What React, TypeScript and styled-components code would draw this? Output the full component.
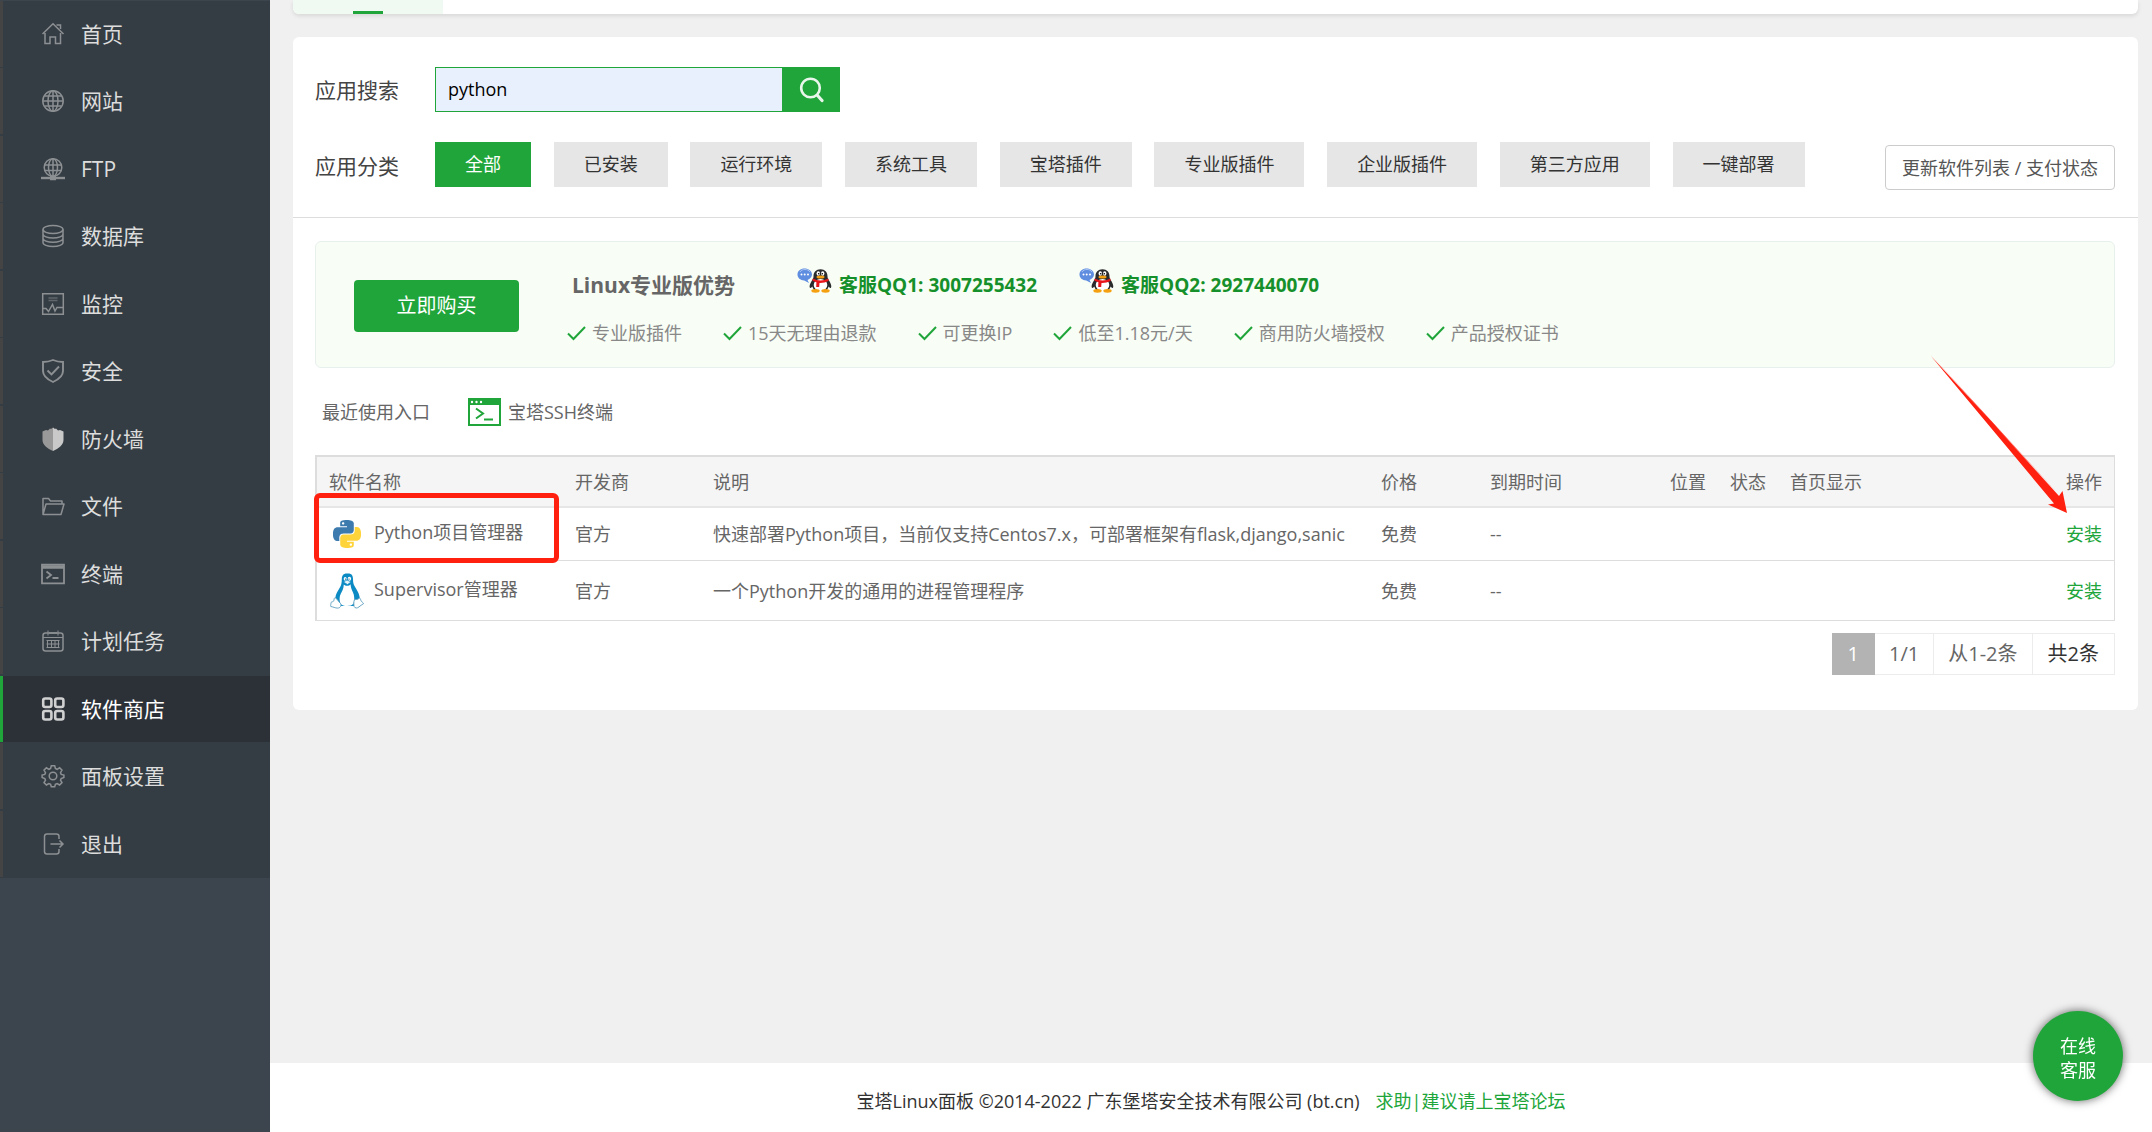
import React from 'react';
import styled, { createGlobalStyle } from 'styled-components';

const green = '#20a53a';
const red = '#ff2010';

const GlobalStyle = createGlobalStyle`
  * { box-sizing: border-box; }
  body {
    margin: 0;
    background: #f0f0f0;
    color: #333;
    font-family: "Open Sans", "Noto Sans CJK SC", sans-serif;
    font-size: 18px;
    line-height: 24px;
  }
  button, input { font: inherit; }
  a { color: inherit; text-decoration: none; }
  svg { display: block; flex: none; }
`;

const Layout = styled.div`
  display: flex;
  min-height: 100vh;
`;

/* ---------- sidebar ---------- */

const Sidebar = styled.nav`
  flex: none;
  width: 270px;
  background: #3c444d;
  padding-top: 1px;
`;

const Menu = styled.ul`
  list-style: none;
  margin: 0;
  padding: 0;
  background: #353d44;
`;

const MenuItem = styled.li`
  padding-bottom: 1px;
  &:nth-child(even) { padding-bottom: 2px; }
`;

const MenuLink = styled.a<{ $active?: boolean }>`
  display: flex;
  align-items: center;
  gap: 16px;
  height: 66px;
  padding-left: 38px;
  border-left: 3px solid ${p => (p.$active ? green : '#444')};
  background: ${p => (p.$active ? '#2c3138' : 'transparent')};
  color: ${p => (p.$active ? '#fff' : '#ddd')};
  font-size: 21px;
  svg { color: ${p => (p.$active ? '#d0d0d0' : '#8c9093')}; }
`;

const Glyph = ({ children }: { children: React.ReactNode }) => (
  <svg width="24" height="24" viewBox="0 0 24 24" fill="none" stroke="currentColor" strokeWidth="1.5" aria-hidden="true">
    {children}
  </svg>
);

const icons: Record<string, React.ReactNode> = {
  home: <path d="M1.5 12 12 1.8 22.5 12M4 11v10.5h5V15h5.500v6.500h5V11M15.500 3h4v4" />,
  globe: (
    <>
      <circle cx="12" cy="12" r="10.200" />
      <ellipse cx="12" cy="12" rx="5" ry="10.200" />
      <path d="M12 2v20M2 12h20M3.500 7h17M3.500 17h17" />
    </>
  ),
  ftp: (
    <>
      <circle cx="12" cy="10.500" r="8.800" />
      <ellipse cx="12" cy="10.500" rx="4.500" ry="8.800" />
      <path d="M12 2v18M3.500 8h17M3.500 13.500h17" />
      <path d="M0 21h24" strokeWidth="2.400" />
      <path d="M9 21h6" strokeWidth="4.500" />
    </>
  ),
  database: (
    <>
      <ellipse cx="12" cy="5.500" rx="10" ry="4" />
      <path d="M2 5.500v13c0 2.300 4.500 4 10 4s10-1.700 10-4v-13M2 10c0 2.300 4.500 4 10 4s10-1.700 10-4M2 14.300c0 2.300 4.500 4 10 4s10-1.700 10-4" />
    </>
  ),
  monitor: (
    <>
      <path d="M1.700 1.700h20.600v20.600H1.700z" />
      <path d="M7.500 6h9M7.500 8.500h9" opacity=".5" />
      <path d="M1.700 16.500H5l2.500 3 4-7 2.500 6.500 2-3.500h6" />
    </>
  ),
  safe: (
    <path d="M12 1c3.500 1.500 6.500 2 10 2v9c0 5-4.500 8.500-10 11C6.500 20.500 2 17 2 12V3c3.500 0 6.500-.5 10-2zM6.500 11.500l4 4 7.500-8" strokeWidth="1.900" />
  ),
  firewall: (
    <>
      <path d="M12 .5 10 2 9 1.500 7 3.500 5 3 1.500 4.500V13c0 5 5 8.500 10.500 11z" fill="#999" stroke="none" />
      <path d="m12 .5 2 1.500 1-.5 2 2 2-.5 3.500 1.500V13c0 5-5 8.500-10.500 11z" fill="#c9c9c9" stroke="none" />
    </>
  ),
  folder: <path d="M2 20.500V4.500h5.500l2 2.500H21v3M2 20.500l3-10.500h18l-3 10.500z" strokeLinejoin="round" />,
  terminal: (
    <>
      <path d="M1 2.700h22v18.600H1z" strokeWidth="1.800" />
      <path d="M1 5h22" strokeWidth="3.500" />
      <path d="m5.500 9.500 4.500 3.500-4.500 3.500M11.500 16h6" strokeWidth="1.800" />
    </>
  ),
  calendar: (
    <>
      <rect x="2" y="4" width="20" height="18" rx="2.500" />
      <path d="M7 1.500v5M17 1.500v5M2 8.500h20M5.500 11.500h13M5.500 15h13M5.500 18.500h13M6.500 11v8M10.500 11v8M14 11v8M17.500 11v8" strokeWidth="1" />
      <path d="M8 4h8" />
    </>
  ),
  store: (
    <g strokeWidth="2.600">
      <rect x="2.200" y="1.500" width="8.200" height="8.500" rx="2" />
      <rect x="14.200" y="1.500" width="8.200" height="8.500" rx="2" />
      <rect x="2.200" y="14" width="8.200" height="8.500" rx="2" />
      <rect x="14.200" y="14" width="8.200" height="8.500" rx="2" />
    </g>
  ),
  settings: (
    <>
      <circle cx="12" cy="12" r="3.800" />
      <path d="m10.300 1.800h3.400l.7 2.700 1.700.8 2.500-1.500 2.400 2.400-1.500 2.500.7 1.700 2.700.7v2.400l-2.700 1-.7 1.700 1.500 2.400-2.400 2.400-2.500-1.500-1.700.7-.7 2.600h-3.400l-.7-2.600-1.700-.7-2.500 1.500-2.400-2.400 1.500-2.400-.7-1.700-2.700-1v-2.400l2.700-.7.7-1.700-1.500-2.500 2.400-2.400 2.500 1.500 1.700-.8z" />
    </>
  ),
  exit: <path d="M18 7V4.500c0-1.500-1-2.500-2.500-2.500H6C4.500 2 3.500 3 3.500 4.500v15C3.500 21 4.500 22 6 22h9.500c1.500 0 2.500-1 2.500-2.500V17M9.500 12H22M18.500 8.500 22 12l-3.500 3.500" />,
};

const menu = [
  ['home', '首页'],
  ['globe', '网站'],
  ['ftp', 'FTP'],
  ['database', '数据库'],
  ['monitor', '监控'],
  ['safe', '安全'],
  ['firewall', '防火墙'],
  ['folder', '文件'],
  ['terminal', '终端'],
  ['calendar', '计划任务'],
  ['store', '软件商店'],
  ['settings', '面板设置'],
  ['exit', '退出'],
];

/* ---------- page ---------- */

const Page = styled.div`
  flex: 1;
  min-width: 0;
  display: flex;
  flex-direction: column;
`;

const Content = styled.main`
  flex: 1;
  padding: 0 14px 24px 23px;
`;

const TopTabs = styled.div`
  height: 14px;
  margin-bottom: 23px;
  background: #fff;
  border-radius: 0 0 6px 6px;
  box-shadow: 0 2px 4px rgba(0, 0, 0, 0.1);
  overflow: hidden;
`;

const ActiveTab = styled.div`
  display: flex;
  align-items: flex-end;
  justify-content: center;
  width: 150px;
  height: 100%;
  background: #f0f9f2;
  &::after {
    content: '';
    width: 30px;
    height: 3px;
    background: ${green};
  }
`;

const Card = styled.section`
  background: #fff;
  border-radius: 6px;
`;

const Filters = styled.div`
  display: grid;
  gap: 30px;
  padding: 30px 23px 27px 22px;
  border-bottom: 1px solid #ddd;
`;

const FilterRow = styled.div`
  display: flex;
  align-items: center;
`;

const FilterLabel = styled.label`
  width: 120px;
  font-size: 21px;
  color: #444;
`;

const SearchBox = styled.form`
  display: flex;
  height: 45px;
`;

const SearchInput = styled.input`
  width: 347px;
  padding: 0 12px 2px;
  border: 1px solid ${green};
  border-right: 0;
  background: #e8f0fe;
  color: #000;
  outline: none;
`;

const SearchButton = styled.button`
  display: flex;
  align-items: center;
  justify-content: center;
  width: 58px;
  border: 0;
  background: ${green};
`;

const Categories = styled.div`
  flex: 1;
  align-self: flex-start;
`;

const Category = styled.button<{ $active?: boolean }>`
  height: 45px;
  padding: 0 30px 2px;
  margin-right: 18px;
  border: 0;
  vertical-align: top;
  background: ${p => (p.$active ? green : '#e6e6e6')};
  color: ${p => (p.$active ? '#fff' : '#333')};
`;

const RefreshButton = styled.button`
  align-self: flex-start;
  height: 45px;
  margin-top: 3px;
  padding: 0 16px;
  border: 1px solid #ccc;
  border-radius: 4px;
  background: #fff;
  color: #555;
`;

const CardBody = styled.div`
  padding: 23px 23px 35px 22px;
`;

const Banner = styled.div`
  display: flex;
  align-items: center;
  gap: 48px;
  height: 127px;
  padding-left: 38px;
  border: 1px solid #e8f0ee;
  border-radius: 6px;
  background: #f8fdf5;
`;

const BuyButton = styled.button`
  width: 165px;
  height: 52px;
  margin-top: 2px;
  border: 0;
  border-radius: 4px;
  background: ${green};
  color: #fff;
  font-size: 20px;
`;

const BannerInfo = styled.div`
  display: grid;
  gap: 20px;
  padding-top: 4px;
`;

const BannerTop = styled.div`
  display: flex;
  align-items: center;
  padding-left: 5px;
`;

const BannerTitle = styled.h2`
  width: 225px;
  margin: 0;
  color: #666;
  font-size: 21px;
  line-height: 24px;
`;

const Contact = styled.a`
  display: flex;
  align-items: center;
  gap: 7px;
  margin-right: 42px;
  color: #16902a;
  font-size: 19px;
  font-weight: 700;
  svg { margin-bottom: 8px; }
`;

const Features = styled.ul`
  display: flex;
  gap: 41px;
  margin: 0;
  padding: 0;
  list-style: none;
  color: #888;
`;

const Feature = styled.li`
  display: flex;
  align-items: center;
  gap: 6px;
`;

const Recent = styled.div`
  display: flex;
  align-items: center;
  height: 28px;
  margin: 30px 0 29px;
  padding-left: 7px;
  gap: 38px;
  color: #666;
`;

const RecentLink = styled.a`
  display: flex;
  align-items: center;
  gap: 7px;
`;

/* ---------- table ---------- */

const Table = styled.table`
  width: 100%;
  table-layout: fixed;
  border: solid #ddd;
  border-width: 2px 1px 0 2px;
  border-spacing: 0;
  color: #666;
`;

const Head = styled.th<{ $w?: number; $right?: boolean }>`
  position: relative;
  width: ${p => (p.$w ? `${p.$w}px` : 'auto')};
  height: 51px;
  padding: 0 12px;
  border-bottom: 2px solid #e6e6e6;
  background: #f5f5f5;
  font-weight: 400;
  text-align: ${p => (p.$right ? 'right' : 'left')};
  white-space: nowrap;
`;

const Row = styled.tr<{ $tall?: boolean }>`
  height: ${p => (p.$tall ? 60 : 53)}px;
`;

const Cell = styled.td<{ $right?: boolean }>`
  position: relative;
  padding: 0 12px;
  border-bottom: 1px solid #ddd;
  text-align: ${p => (p.$right ? 'right' : 'left')};
  white-space: nowrap;
`;

const SoftName = styled.a`
  display: flex;
  align-items: center;
  gap: 9px;
`;

const SoftIcon = styled.span`
  display: flex;
  justify-content: center;
  width: 36px;
`;

const SoftText = styled.span`
  padding-bottom: 4px;
`;

const InstallLink = styled.a`
  color: ${green};
`;

const Highlight = styled.span`
  position: absolute;
  top: -15px;
  left: -3px;
  right: 4px;
  bottom: -3px;
  border: 5px solid ${red};
  border-radius: 6px;
  pointer-events: none;
`;

const Pointer = styled.svg`
  position: absolute;
  top: -102px;
  right: 46px;
  pointer-events: none;
`;

const Pager = styled.div`
  display: flex;
  justify-content: flex-end;
  margin-top: 12px;
  font-size: 20px;
  color: #666;
`;

const PageCell = styled.span<{ $current?: boolean; $strong?: boolean }>`
  height: 42px;
  padding: 0 ${p => (p.$current || p.$strong ? 15 : 14)}px;
  border: 1px solid ${p => (p.$current ? '#b3b3b3' : '#ececec')};
  border-left-width: ${p => (p.$current ? 1 : 0)}px;
  background: ${p => (p.$current ? '#b3b3b3' : '#fff')};
  color: ${p => (p.$current ? '#fff' : p.$strong ? '#333' : 'inherit')};
  line-height: 40px;
`;

const Footer = styled.footer`
  display: flex;
  align-items: center;
  justify-content: center;
  gap: 16px;
  height: 69px;
  padding-top: 6px;
  background: #fff;
  a { color: ${green}; }
`;

const Support = styled.button`
  position: fixed;
  right: 29px;
  bottom: 31px;
  width: 90px;
  height: 90px;
  padding: 4px 24px 0;
  border: 0;
  border-radius: 50%;
  background: ${green};
  box-shadow: 0 0 10px rgba(0, 0, 0, 0.6);
  color: #fff;
`;

/* ---------- drawings ---------- */

const QQIcon = () => (
  <svg width="35" height="25" viewBox="0 0 35 25" aria-hidden="true">
    <path d="M7.500.5C11.500.5 15 3 15 6.500c0 2.500-2 4.600-4.500 5.500l1.500 3-4.800-2.600C3.200 12.300.5 9.800.5 6.500.5 3 3.500.5 7.500.5z" fill="#5f8de0" />
    <path d="M3 4c1-2 3-2.500 5-2.500s4 .8 5 2.500" fill="none" stroke="#a9c4f3" />
    <g fill="#fff"><circle cx="4.500" cy="6.500" r="1" /><circle cx="7.700" cy="6.500" r="1" /><circle cx="11" cy="6.500" r="1" /></g>
    <path d="M23.500 1.200c4.500 0 7 3 7 7 0 2 .5 2.500 2 5 1.500 2.700 2.300 5 1.500 6.500-.6.800-1.800-.3-2.300-1.200L30 22H17l-1.800-3.500c-.5.900-1.700 2-2.300 1.200-.8-1.500 0-3.800 1.600-6.500 1.500-2.500 2-3 2-5 0-4 2.500-7 7-7z" fill="#2b2b2e" />
    <ellipse cx="23.500" cy="17" rx="6.800" ry="6" fill="#fff" />
    <ellipse cx="18.500" cy="22.800" rx="4.200" ry="1.900" fill="#f5a010" />
    <ellipse cx="28.500" cy="22.800" rx="4.200" ry="1.900" fill="#f5a010" />
    <ellipse cx="21.300" cy="5.500" rx="1.700" ry="2.200" fill="#fff" />
    <ellipse cx="25.700" cy="5.500" rx="1.700" ry="2.200" fill="#fff" />
    <circle cx="21.700" cy="5.800" r=".8" /><circle cx="25.300" cy="5.800" r=".8" />
    <ellipse cx="23.500" cy="9" rx="4" ry="1.500" fill="#f5a010" />
    <path d="M15.800 10.500c4.500 2.500 11 2.500 15.500 0l.4 2.300c-3 1.700-6 2.300-9.200 2.200l-.3 4h-3l.2-4.700c-1.500-.4-2.900-1-4-1.700z" fill="#e8151b" />
  </svg>
);

const CheckIcon = () => (
  <svg width="19" height="15" viewBox="0 0 19 15" fill="none" stroke={green} strokeWidth="2" aria-hidden="true">
    <path d="m1 7.500 5.500 5.500L18 1" />
  </svg>
);

const SshIcon = () => (
  <svg width="33" height="28" viewBox="0 0 33 28" aria-hidden="true">
    <rect x="1" y="1" width="31" height="26" fill="#fff" stroke={green} strokeWidth="2" />
    <path d="M0 0h33v7H0z" fill={green} />
    <g fill="#fff"><circle cx="4" cy="4" r="1.200" /><circle cx="8.500" cy="4" r="1.200" /><circle cx="13" cy="4" r="1.200" /></g>
    <path d="m8 10.500 7 5-7 5M16 21.500h9" fill="none" stroke={green} strokeWidth="2" />
  </svg>
);

const PythonIcon = () => (
  <svg width="28" height="28" viewBox="0 0 24 24" aria-hidden="true">
    <path fill="#3d7aae" d="M14.25.18l.9.2.73.26.59.3.45.32.34.34.25.34.16.33.1.3.04.26.02.2-.01.13V8.5l-.05.63-.13.55-.21.46-.26.38-.3.31-.33.25-.35.19-.35.14-.33.1-.3.07-.26.04-.21.02H8.77l-.69.05-.59.14-.5.22-.41.27-.33.32-.27.35-.2.36-.15.37-.1.35-.07.32-.04.27-.02.21v3.06H3.17l-.21-.03-.28-.07-.32-.12-.35-.18-.36-.26-.36-.36-.35-.46-.32-.59-.28-.73-.21-.88-.14-1.05-.05-1.23.06-1.22.16-1.04.24-.87.32-.71.36-.57.4-.44.42-.33.42-.24.4-.16.36-.1.32-.05.24-.01h.16l.06.01h8.16v-.83H6.18l-.01-2.75-.02-.37.05-.34.11-.31.17-.28.25-.26.31-.23.38-.2.44-.18.51-.15.58-.12.64-.1.71-.06.77-.04.84-.02 1.27.05zm-6.3 1.98l-.23.33-.08.41.08.41.23.34.33.22.41.09.41-.09.33-.22.23-.34.08-.41-.08-.41-.23-.33-.33-.22-.41-.09-.41.09z" />
    <path fill="#ffd43b" d="M21.04 6.11l.28.06.32.12.35.18.36.27.36.35.35.47.32.59.28.73.21.88.14 1.04.05 1.23-.06 1.23-.16 1.04-.24.86-.32.71-.36.57-.4.45-.42.33-.42.24-.4.16-.36.09-.32.05-.24.02-.16-.01h-8.22v.82h5.84l.01 2.76.02.36-.05.34-.11.31-.17.29-.25.25-.31.24-.38.2-.44.17-.51.15-.58.13-.64.09-.71.07-.77.04-.84.01-1.27-.04-1.07-.14-.9-.2-.73-.25-.59-.3-.45-.33-.34-.34-.25-.34-.16-.33-.1-.3-.04-.25-.02-.2.01-.13v-5.34l.05-.64.13-.54.21-.46.26-.38.3-.32.33-.24.35-.2.35-.14.33-.1.3-.06.26-.04.21-.02.13-.01h5.84l.69-.05.59-.14.5-.21.41-.28.33-.32.27-.35.2-.36.15-.36.1-.35.07-.32.04-.28.02-.21V6.07h2.09l.14.01zM14.57 20.36l-.23.33-.08.41.08.41.23.33.33.23.41.08.41-.08.33-.23.23-.33.08-.41-.08-.41-.23-.33-.33-.23-.41-.08-.41.08z" />
  </svg>
);

const TuxIcon = () => (
  <svg width="34" height="36" viewBox="0 0 34 36" aria-hidden="true">
    <path d="M16.500.5h2c3 0 4.500 2.200 4.500 5.500 0 4 .6 6 3 9.500 2.300 3.500 3.800 7 3.800 10.500 0 3-1 5-3 7H7.500C6 31 5 28.500 5.300 25c.3-3.500 2.200-6.500 4-9.500 2-3 2.500-5.500 2.500-9.500 0-3.300 1.700-5.500 4.700-5.500z" fill="#0b8ac4" />
    <path d="M13.800 11.500c1.500 1.800 5.400 1.800 6.700-.3.400 3.800 1.200 5.500 2.500 8.300 1.500 3.300 1.700 7.500.5 11-2 3.300-10.500 3.300-13 .2-1.200-3.200-1.400-6.700.4-10.200 1.500-3 2.700-5 2.900-9z" fill="#fff" />
    <ellipse cx="15.200" cy="5.800" rx="1.500" ry="1.900" fill="#fff" />
    <ellipse cx="19.400" cy="5.800" rx="1.700" ry="2.100" fill="#fff" />
    <circle cx="15.500" cy="6.100" r=".7" fill="#075f8c" /><circle cx="19" cy="6.100" r=".7" fill="#075f8c" />
    <path d="m13.500 9 3.500-2 4 2-3.500 2.500z" fill="#e6f4fa" stroke="#0b8ac4" strokeWidth=".6" />
    <path d="M5 24.500c2 1.200 3.500 4 5.500 6 1.300 2-.2 4.600-3 4.600-2.200 0-4.500-1.300-6.700-1.600-.5-1.700.3-2.300.2-4 .9-1 2.200-.5 2.700-1.500.5-1.200.2-2.800 1.300-3.500zM29.500 25c-1.800 2-4.500 1.500-5 1.500-1 2.500-.7 5-.4 7 .7 1.900 3.300 1.900 4.900.4 1.300-1.500 3-1.900 4.500-3.200-.2-1.300-1.700-1.500-2.300-2.600-.7-1.200-.4-2.700-1.700-3.100z" fill="#fff" stroke="#5a9dbd" strokeWidth=".9" />
  </svg>
);

const categories = ['全部', '已安装', '运行环境', '系统工具', '宝塔插件', '专业版插件', '企业版插件', '第三方应用', '一键部署'];
const features = ['专业版插件', '15天无理由退款', '可更换IP', '低至1.18元/天', '商用防火墙授权', '产品授权证书'];
const software = [
  { name: 'Python项目管理器', icon: <PythonIcon />, desc: '快速部署Python项目，当前仅支持Centos7.x，可部署框架有flask,django,sanic', marked: true },
  { name: 'Supervisor管理器', icon: <TuxIcon />, desc: '一个Python开发的通用的进程管理程序', marked: false },
];

export default function App() {
  return (
    <Layout>
      <GlobalStyle />
      <Sidebar>
        <Menu>
          {menu.map(([icon, label]) => (
            <MenuItem key={icon}>
              <MenuLink href="#" $active={icon === 'store'}>
                <Glyph>{icons[icon]}</Glyph>
                {label}
              </MenuLink>
            </MenuItem>
          ))}
        </Menu>
      </Sidebar>

      <Page>
        <Content>
          <TopTabs><ActiveTab /></TopTabs>
          <Card>
            <Filters>
              <FilterRow>
                <FilterLabel htmlFor="search">应用搜索</FilterLabel>
                <SearchBox onSubmit={e => e.preventDefault()}>
                  <SearchInput id="search" type="text" defaultValue="python" />
                  <SearchButton type="submit" aria-label="搜索">
                    <svg width="26" height="26" viewBox="0 0 26 26" fill="none" stroke="#e9f6eb" strokeWidth="2.600" strokeLinecap="round">
                      <circle cx="12.500" cy="11" r="9.300" />
                      <path d="m19.500 18.500 4.500 5" strokeWidth="3.200" />
                    </svg>
                  </SearchButton>
                </SearchBox>
              </FilterRow>
              <FilterRow>
                <FilterLabel as="span">应用分类</FilterLabel>
                <Categories>
                  {categories.map((c, i) => (
                    <React.Fragment key={c}>
                      <Category type="button" $active={i === 0}>{c}</Category>{' '}
                    </React.Fragment>
                  ))}
                </Categories>
                <RefreshButton type="button">更新软件列表 / 支付状态</RefreshButton>
              </FilterRow>
            </Filters>

            <CardBody>
              <Banner>
                <BuyButton type="button">立即购买</BuyButton>
                <BannerInfo>
                  <BannerTop>
                    <BannerTitle>Linux专业版优势</BannerTitle>
                    <Contact href="#"><QQIcon />客服QQ1: 3007255432</Contact>
                    <Contact href="#"><QQIcon />客服QQ2: 2927440070</Contact>
                  </BannerTop>
                  <Features>
                    {features.map(f => (
                      <Feature key={f}><CheckIcon />{f}</Feature>
                    ))}
                  </Features>
                </BannerInfo>
              </Banner>

              <Recent>
                <span>最近使用入口</span>
                <RecentLink href="#"><SshIcon />宝塔SSH终端</RecentLink>
              </Recent>

              <Table>
                <thead>
                  <tr>
                    <Head $w={246}>软件名称</Head>
                    <Head $w={138}>开发商</Head>
                    <Head>说明</Head>
                    <Head $w={109}>价格</Head>
                    <Head $w={180}>到期时间</Head>
                    <Head $w={60}>位置</Head>
                    <Head $w={60}>状态</Head>
                    <Head $w={120}>首页显示</Head>
                    <Head $w={216} $right>
                      操作
                      <Pointer width="138" height="159" viewBox="0 0 138 159" fill={red} aria-hidden="true">
                        <path d="M.5.500 131.500 142.500 1.500.500 129 141 132.500 136 137 158 118 149.500 124 148.500z" />
                      </Pointer>
                    </Head>
                  </tr>
                </thead>
                <tbody>
                  {software.map(s => (
                    <Row key={s.name} $tall={!s.marked}>
                      <Cell>
                        <SoftName href="#">
                          <SoftIcon>{s.icon}</SoftIcon>
                          <SoftText>{s.name}</SoftText>
                        </SoftName>
                        {s.marked && <Highlight />}
                      </Cell>
                      <Cell>官方</Cell>
                      <Cell>{s.desc}</Cell>
                      <Cell>免费</Cell>
                      <Cell>--</Cell>
                      <Cell />
                      <Cell />
                      <Cell />
                      <Cell $right><InstallLink href="#">安装</InstallLink></Cell>
                    </Row>
                  ))}
                </tbody>
              </Table>

              <Pager>
                <PageCell $current>1</PageCell>
                <PageCell>1/1</PageCell>
                <PageCell>从1-2条</PageCell>
                <PageCell $strong>共2条</PageCell>
              </Pager>
            </CardBody>
          </Card>
        </Content>

        <Footer>
          <span>宝塔Linux面板 ©2014-2022 广东堡塔安全技术有限公司 (bt.cn)</span>
          <a href="#">求助|建议请上宝塔论坛</a>
        </Footer>
      </Page>

      <Support type="button">在线客服</Support>
    </Layout>
  );
}
